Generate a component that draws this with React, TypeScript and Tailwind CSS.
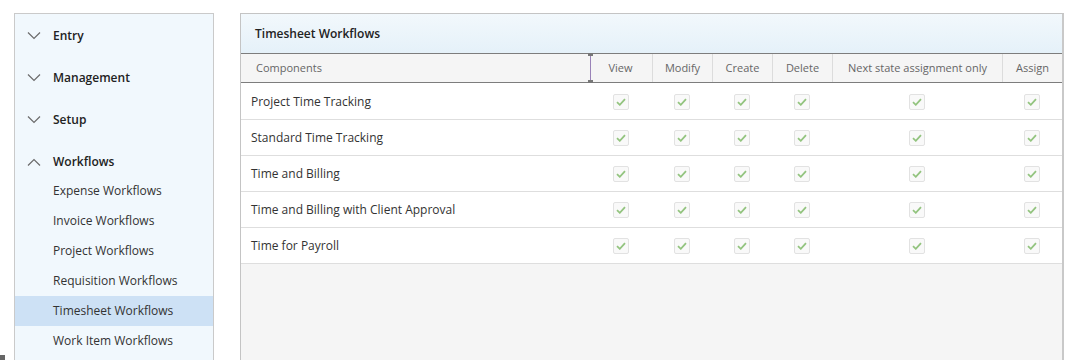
import React from "react"

const groups = [
  { label: "Entry", open: false },
  { label: "Management", open: false },
  { label: "Setup", open: false },
  { label: "Workflows", open: true },
]

const links = [
  "Expense Workflows",
  "Invoice Workflows",
  "Project Workflows",
  "Requisition Workflows",
  "Timesheet Workflows",
  "Work Item Workflows",
]

const columns = [
  { label: "View", w: "w-[63px]" },
  { label: "Modify", w: "w-[60px]" },
  { label: "Create", w: "w-[60px]" },
  { label: "Delete", w: "w-[60px]" },
  { label: "Next state assignment only", w: "w-[170px]" },
  { label: "Assign", w: "w-[60px]" },
]

const rows = [
  "Project Time Tracking",
  "Standard Time Tracking",
  "Time and Billing",
  "Time and Billing with Client Approval",
  "Time for Payroll",
]

function Chevron({ up }: { up: boolean }) {
  return (
    <svg width="14" height="8" viewBox="0 0 14 8" fill="none" className="shrink-0">
      <path
        d={up ? "M1 7.5 L7 1.5 L13 7.5" : "M1 0.5 L7 6.5 L13 0.5"}
        stroke="#6b6b6b"
        strokeWidth="1.2"
      />
    </svg>
  )
}

function Check() {
  return (
    <div className="w-[16px] h-[16px] rounded-[2px] border border-[#e2e2e2] bg-[#f9f9f9] flex items-center justify-center">
      <svg width="10" height="8" viewBox="0 0 10 8" fill="none">
        <path d="M1 4.2 L3.8 6.8 L9 1.2" stroke="#93c47f" strokeWidth="1.8" />
      </svg>
    </div>
  )
}

export default function App() {
  return (
    <div
      className="relative h-[360px] w-[1087px] overflow-hidden bg-white flex pt-[13px] pl-[14px] gap-[26px] text-[12px] text-[#333]"
      style={{ fontFamily: '"Open Sans", "Noto Sans", sans-serif' }}
    >
      {/* Side menu */}
      <aside className="w-[200px] shrink-0 border border-[#cacaca] border-b-0 bg-[#f1f8fd]">
        <div className="pt-[1px]">
          {groups.map((g) => (
            <div key={g.label} className="h-[42px] flex items-center gap-[12px] pl-[12px] font-semibold text-[12px] text-[#222]">
              <Chevron up={g.open} />
              <span>{g.label}</span>
            </div>
          ))}
        </div>
        <div className="-mt-[7px]">
          {links.map((l) => (
            <div
              key={l}
              className={
                "h-[30px] flex items-center pl-[38px] text-[12px] text-[#333] " +
                (l === "Timesheet Workflows" ? "bg-[#cde1f5]" : "")
              }
            >
              {l}
            </div>
          ))}
        </div>
      </aside>

      {/* Main panel */}
      <main className="w-[824px] shrink-0 border border-[#c4c4c4] border-b-0 border-r-2 border-r-[#c9c9c9] bg-[#f5f5f5] flex flex-col">
        <div className="h-[40px] shrink-0 flex items-center pl-[14px] font-semibold text-[12px] text-[#222] bg-gradient-to-b from-[#f2f8fc] to-[#e5f1f9] border-b border-[#7d7d7d]">
          Timesheet Workflows
        </div>

        <div className="relative h-[29px] shrink-0 flex bg-[#f5f5f5] border-b border-[#7d7d7d] text-[11px] text-[#666]">
          <div className="flex-1 flex items-center pl-[15px]">Components</div>
          {columns.map((c, i) => (
            <div
              key={c.label}
              className={
                c.w + " flex items-center justify-center " + (i > 0 ? "border-l border-[#dcdcdc]" : "")
              }
            >
              {c.label}
            </div>
          ))}
          <div className="absolute left-[349px] top-0 bottom-0 w-[1px] bg-[#9a83b8]">
            <div className="absolute -left-[2px] -top-[1px] w-[5px] h-[3px] bg-[#777]" />
            <div className="absolute -left-[2px] -bottom-[1px] w-[5px] h-[3px] bg-[#777]" />
          </div>
        </div>

        <div className="bg-white pt-[1px]">
          {rows.map((r) => (
            <div key={r} className="h-[36px] flex border-b border-[#dedede]">
              <div className="flex-1 flex items-center pl-[10px] text-[12px] text-[#333]">{r}</div>
              {columns.map((c) => (
                <div key={c.label} className={c.w + " flex items-center justify-center"}>
                  <Check />
                </div>
              ))}
            </div>
          ))}
        </div>
      </main>

      <div className="absolute left-0 bottom-0 w-[5px] h-[5px] bg-[#666]" />
    </div>
  )
}
